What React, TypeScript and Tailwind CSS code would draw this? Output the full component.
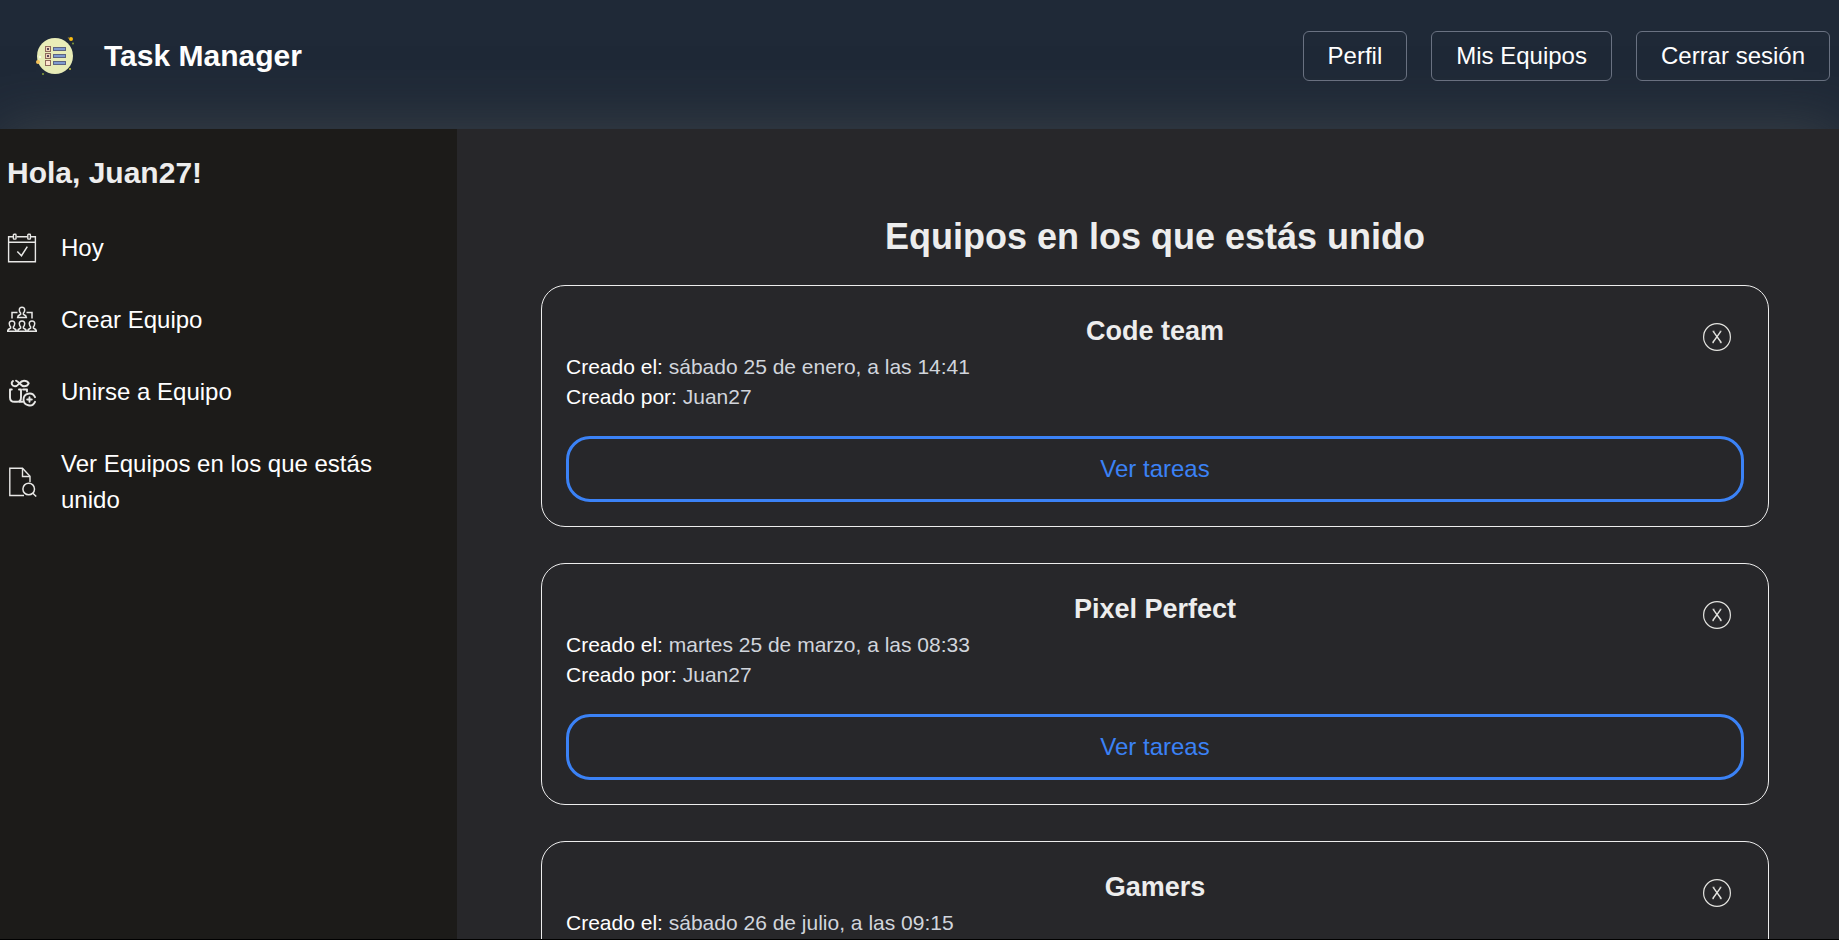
import type { ReactNode } from "react";

type Team = { name: string; created: string; owner: string };

const teams: Team[] = [
  { name: "Code team", created: "sábado 25 de enero, a las 14:41", owner: "Juan27" },
  { name: "Pixel Perfect", created: "martes 25 de marzo, a las 08:33", owner: "Juan27" },
  { name: "Gamers", created: "sábado 26 de julio, a las 09:15", owner: "Juan27" },
];

function Logo() {
  return (
    <svg viewBox="1 0 48 48" className="size-12" aria-hidden="true">
      <circle cx="24" cy="24" r="18" fill="#e9edb8" />
      <circle cx="40" cy="7" r="2" fill="#fbbc10" />
      <circle cx="37.500" cy="6" r="0.8" fill="#8a7a30" />
      <circle cx="42" cy="11.500" r="1" fill="#7f9a3a" />
      <circle cx="7" cy="30" r="2" fill="#f6c35a" />
      <circle cx="39" cy="37" r="1" fill="#c2c23a" />
      <circle cx="12" cy="42" r="1" fill="#8aa53a" />
      <circle cx="9" cy="25" r="1.200" fill="#fbfce8" />
      {[17, 24, 31].map((y, i) => (
        <g key={y}>
          <rect x="14.500" y={y - 2.5} width="5" height="5" fill={i === 2 ? "#fde3cf" : "#f0d5bd"} stroke="#8f6a5c" />
          {i < 2 && <rect x="16" y={y - 1} width="2" height="2" fill="#5a4a58" />}
          <rect x="22.500" y={y - 1.5} width="12" height="3" fill="#7f9bd0" stroke="#5d6482" />
        </g>
      ))}
    </svg>
  );
}

function Icon({ children }: { children: ReactNode }) {
  return (
    <svg viewBox="0 0 30 30" className="size-[30px] shrink-0" fill="none" stroke="#e8e8e6" strokeWidth="1.4" aria-hidden="true">
      {children}
    </svg>
  );
}

function TodayIcon() {
  return (
    <Icon>
      <path d="M6 3.700H1.600v25h26.800v-25H24M9.500 3.700h11M1.600 9.300h26.800" />
      <rect x="6.400" y="1.300" width="2.600" height="4.800" rx="0.600" />
      <rect x="20.800" y="1.300" width="2.600" height="4.800" rx="0.600" />
      <path d="M10.300 18.500l4.200 4.200 5.800-9" strokeWidth="1.500" />
    </Icon>
  );
}

function Person({ x, y }: { x: number; y: number }) {
  return (
    <g transform={`translate(${x} ${y})`}>
      <path d="M0-5.200c-1.800 0-2.800 1.200-2.700 2.800.1 1.500.7 2.500 1.300 3v1.300c-1.300.7-2.800.8-3 3.100h8.800c-.2-2.300-1.700-2.400-3-3.100V.6c.6-.5 1.200-1.500 1.300-3C2.800-4 1.800-5.200 0-5.200z" />
    </g>
  );
}

function CreateTeamIcon() {
  return (
    <Icon>
      <g strokeWidth="1.500">
        <Person x={15} y={7.5} />
        <Person x={5} y={21.2} />
        <Person x={15} y={21.2} />
        <Person x={25} y={21.2} />
        <path d="M10.500 7.500H5v6M19.500 7.500H25v6" />
      </g>
    </Icon>
  );
}

function JoinTeamIcon() {
  return (
    <Icon>
      <g strokeWidth="1.900" strokeLinecap="round" strokeLinejoin="round">
        <path d="M6 4C3.500 6 5 9.300 8 9.300c3.500 0 4.500-5.600 9-5.600 2.500 0 4 1.300 4.700 2.600-.7 1.700-2.200 3-4.700 3-3 0-4.500-4.300-8-5.600" />
        <path d="M4.800 12.500H3v8c0 3 1.500 4.300 4.500 4.300H10c3 0 4-1.300 4-4.300v-8h-2M16 12.500h4v2" />
        <path d="M28 20.200a6 6 0 0 0-11.500 2.300 6 6 0 0 0 11.500 2.300" />
        <path d="M22.500 20.200v4.600M20.200 22.500h4.600M12.500 24.800h3" />
      </g>
    </Icon>
  );
}

function ViewTeamsIcon() {
  return (
    <Icon>
      <path d="M17 28.500H2.800V1.200h12.700l7.500 8v6" />
      <path d="M15.500 1.200v8.300H23" />
      <circle cx="21.700" cy="22" r="5.800" strokeWidth="1.500" />
      <path d="M25.900 26.200l3.300 3.300" strokeWidth="1.500" />
    </Icon>
  );
}

function CloseIcon() {
  return (
    <svg viewBox="0 0 30 30" className="size-[30px]" fill="none" stroke="#e4e4e0" aria-hidden="true">
      <circle cx="15" cy="15" r="13.400" strokeWidth="1.200" />
      <path d="M11.200 9.300l8 11.200M18.800 9.300l-8 11.200" strokeWidth="1.400" />
      <path d="M10.500 9.200h2M17.700 9.200h1.800M10.200 20.700H12M17.800 20.700h2" strokeWidth="0.800" />
    </svg>
  );
}

const navItems = [
  { label: "Hoy", icon: <TodayIcon /> },
  { label: "Crear Equipo", icon: <CreateTeamIcon /> },
  { label: "Unirse a Equipo", icon: <JoinTeamIcon /> },
  { label: "Ver Equipos en los que estás unido", icon: <ViewTeamsIcon /> },
];

function TeamCard({ team }: { team: Team }) {
  return (
    <article className="relative rounded-3xl border border-[#ededed] p-6">
      <h3 className="text-center text-[27px] leading-[42px] font-bold text-[#ededed]">{team.name}</h3>
      <button type="button" aria-label={`Salir de ${team.name}`} className="absolute top-9 right-9">
        <CloseIcon />
      </button>
      <p className="text-[21px] leading-[30px] text-gray-300">
        <span className="text-white">Creado el:</span> {team.created}
      </p>
      <p className="text-[21px] leading-[30px] text-gray-300">
        <span className="text-white">Creado por:</span> {team.owner}
      </p>
      <button
        type="button"
        className="mt-6 w-full rounded-3xl border-3 border-[#3b82f6] py-3 text-2xl leading-9 text-[#3b82f6]"
      >
        Ver tareas
      </button>
    </article>
  );
}

export default function App() {
  return (
    <div className="flex h-screen flex-col overflow-hidden border-b border-black bg-[#27272a] font-['Liberation_Sans',Arial,sans-serif] text-2xl leading-9 text-white">
      <header className="flex shrink-0 items-center justify-between bg-[#1f2937] pt-6 pr-[9px] pb-[41px] pl-8">
        <div className="flex items-center gap-6">
          <Logo />
          <h1 className="text-[30px] leading-9 font-bold">Task Manager</h1>
        </div>
        <nav className="flex gap-6 py-[7px]">
          {["Perfil", "Mis Equipos", "Cerrar sesión"].map((label) => (
            <button key={label} type="button" className="rounded-md border border-gray-500 px-6 py-1.5">
              {label}
            </button>
          ))}
        </nav>
      </header>
      <div className="flex min-h-0 grow shadow-[0_0_56px_rgba(78,84,84,0.6)]">
        <aside className="w-[457px] shrink-0 bg-[#1c1b19] pt-[26px] pr-12 pl-[7px]">
          <h2 className="text-[30px] leading-9 font-bold text-[#ededed]">Hola, Juan27!</h2>
          <nav className="mt-[39px] flex flex-col gap-9">
            {navItems.map((item) => (
              <a key={item.label} href="#" className="flex items-center gap-6">
                {item.icon}
                <span>{item.label}</span>
              </a>
            ))}
          </nav>
        </aside>
        <main className="min-w-0 grow overflow-hidden bg-[#27272a] pt-[84px] pr-[70px] pl-[84px]">
          <h2 className="text-center text-4xl leading-[48px] font-bold text-[#ededed]">Equipos en los que estás unido</h2>
          <div className="mt-6 flex flex-col gap-9">
            {teams.map((team) => (
              <TeamCard key={team.name} team={team} />
            ))}
          </div>
        </main>
      </div>
    </div>
  );
}
